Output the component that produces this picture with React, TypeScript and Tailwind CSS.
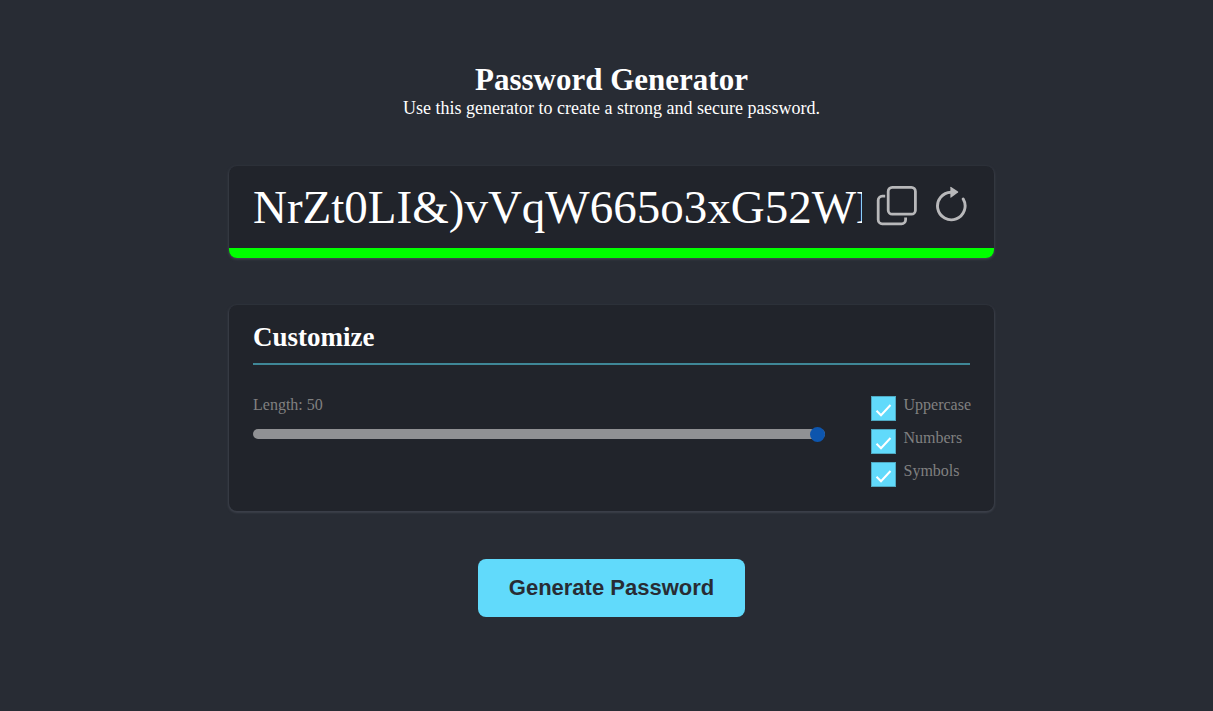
import { useState } from 'react';

const LOWER = 'abcdefghijklmnopqrstuvwxyz';
const UPPER = 'ABCDEFGHIJKLMNOPQRSTUVWXYZ';
const DIGITS = '0123456789';
const MARKS = '!@#$%^&*()';

function createPassword(length: number, upper: boolean, numbers: boolean, symbols: boolean) {
  const pool = LOWER + (upper ? UPPER : '') + (numbers ? DIGITS : '') + (symbols ? MARKS : '');
  return Array.from({ length }, () => pool[Math.floor(Math.random() * pool.length)]).join('');
}

function CopyIcon() {
  return (
    <svg viewBox="0 0 42 42" className="size-[42px]" fill="none" stroke="currentColor" strokeWidth="2.8" strokeLinecap="butt">
      <rect x="12.2" y="2.4" width="27.2" height="26.8" rx="4" />
      <path d="M9.2 11.2H6.2a4 4 0 0 0-4 4V34.8a4 4 0 0 0 4 4H25.6a4 4 0 0 0 4-4V32.6" />
    </svg>
  );
}

function RefreshIcon() {
  return (
    <svg viewBox="0 0 32 36" className="h-9 w-8" fill="none">
      <path d="M28.2 13A13.8 13.8 0 1 1 16 6.2" stroke="currentColor" strokeWidth="2.9" strokeLinecap="round" />
      <path d="M15.4 1.2Q15.4 .4 16.2 .9L23 5.4Q23.6 6 23 6.6L16.2 11.6Q15.4 12.1 15.4 11.2Z" fill="currentColor" />
    </svg>
  );
}

type OptionProps = { id: string; label: string; checked: boolean; onChange: (value: boolean) => void };

function Option({ id, label, checked, onChange }: OptionProps) {
  return (
    <div className="flex h-[33px] items-start gap-[7px]">
      <span className="grid size-[25px] shrink-0">
        <input
          id={id}
          type="checkbox"
          checked={checked}
          onChange={(e) => onChange(e.target.checked)}
          className="col-start-1 row-start-1 size-full appearance-none border border-[#4fa9c2] bg-[#21242b] checked:bg-[#61dafb]"
        />
        {checked && (
          <svg viewBox="0 0 25 25" className="pointer-events-none col-start-1 row-start-1 size-full" fill="none" stroke="white" strokeWidth="2">
            <path d="M5.5 14.7L10 19.2L19.5 9" />
          </svg>
        )}
      </span>
      <label htmlFor={id} className="text-base leading-[18px] text-[#808080]">{label}</label>
    </div>
  );
}

export default function App() {
  const [password, setPassword] = useState('NrZt0LI&)vVqW665o3xG52WDk8(mTz4Rb!y7Qe^cJ1u*Hs9Pfa');
  const [length, setLength] = useState(50);
  const [upper, setUpper] = useState(true);
  const [numbers, setNumbers] = useState(true);
  const [symbols, setSymbols] = useState(true);
  const generate = () => setPassword(createPassword(length, upper, numbers, symbols));

  return (
    <main className="flex min-h-screen flex-col items-center bg-[#282c34] pt-[61px] pr-4 pb-16 pl-[26px] font-['Liberation_Serif',serif] text-white">
      <header className="text-center">
        <h1 className="text-[31px] leading-[37px] font-bold">Password Generator</h1>
        <p className="text-lg leading-5">Use this generator to create a strong and secure password.</p>
      </header>

      <section className="mt-12 w-full max-w-[765px] overflow-hidden rounded-lg bg-[#21242b] shadow-[0_1px_3px_#4b4f5a]">
        <div className="flex h-[82px] items-start px-6 pt-[13px]">
          <input
            aria-label="Generated password"
            readOnly
            value={password}
            className="h-14 min-w-0 flex-1 bg-transparent text-[47px] outline-none"
          />
          <button type="button" aria-label="Copy password" onClick={() => navigator.clipboard?.writeText(password)} className="mt-[6px] ml-[14px] text-[#b8b8ba]">
            <CopyIcon />
          </button>
          <button type="button" aria-label="New password" onClick={generate} className="mt-[7px] mr-[3px] ml-[17px] text-[#b8b8ba]">
            <RefreshIcon />
          </button>
        </div>
        <div className="h-[10px] bg-[#00ff00]" />
      </section>

      <section className="mt-[47px] w-full max-w-[765px] rounded-lg bg-[#21242b] px-6 pt-4 pb-4 shadow-[0_1px_2px_1px_#3c404a]">
        <h2 className="border-b-2 border-[#3f8797] pb-[10px] text-[27px] leading-8 font-bold">Customize</h2>
        <div className="-mr-px mt-[31px] flex justify-between gap-[46px]">
          <div className="flex min-w-0 flex-1 flex-col">
            <label htmlFor="length" className="text-base leading-[18px] text-[#808080]">Length: {length}</label>
            <input
              id="length"
              type="range"
              min={5}
              max={50}
              value={length}
              onChange={(e) => setLength(Number(e.target.value))}
              className="mt-[15px] h-[10px] w-full appearance-none rounded-full bg-[#909194] [&::-webkit-slider-thumb]:size-[15px] [&::-webkit-slider-thumb]:appearance-none [&::-webkit-slider-thumb]:rounded-full [&::-webkit-slider-thumb]:bg-[#0d55ad]"
            />
          </div>
          <div>
            <Option id="uppercase" label="Uppercase" checked={upper} onChange={setUpper} />
            <Option id="numbers" label="Numbers" checked={numbers} onChange={setNumbers} />
            <Option id="symbols" label="Symbols" checked={symbols} onChange={setSymbols} />
          </div>
        </div>
      </section>

      <button
        type="button"
        onClick={generate}
        className="mt-12 rounded-lg bg-[#61dafb] px-[31px] py-4 font-['Liberation_Sans',sans-serif] text-[22px] leading-[26px] font-bold text-[#282c34]"
      >
        Generate Password
      </button>
    </main>
  );
}
